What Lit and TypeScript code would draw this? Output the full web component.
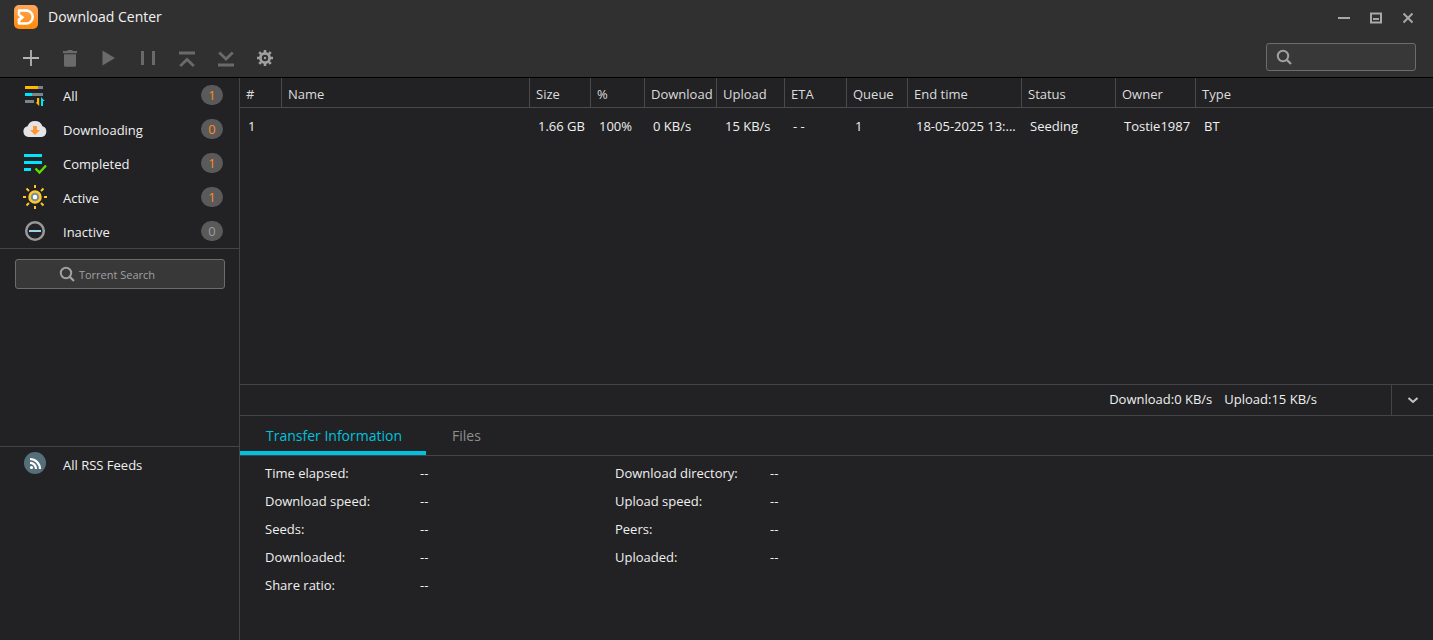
import { LitElement, html, css, svg } from "lit";
import { customElement, state } from "lit/decorators.js";
import { classMap } from "lit/directives/class-map.js";

const logo = html`<svg width="24" height="24" viewBox="0 0 24 24" aria-hidden="true">
  <defs>
    <linearGradient id="logo-fill" x1="0" y1="0" x2="0" y2="1">
      <stop offset="0" stop-color="#ffa55c" />
      <stop offset="1" stop-color="#ff8a08" />
    </linearGradient>
  </defs>
  <rect width="24" height="24" rx="5" fill="url(#logo-fill)" />
  <path d="M5 8.500V5.500H12.200a6.500 6.500 0 0 1 0 13H5V14" fill="none" stroke="#fff" stroke-width="2.500" stroke-linejoin="round" />
  <path d="M3.750 7.500L10.500 12.200 6.200 16 3.750 16.500V13.500L6 12.200 3.750 10Z" fill="#fff" />
</svg>`;

const tools = [
  { label: "Add", on: true, art: svg`<path d="M12 4v16M4 12h16" stroke="#b4b4b4" stroke-width="1.800" />` },
  { label: "Delete", on: false, art: svg`<path d="M5 5h4l1-1h4l1 1h4v2.200H5zM6 8.200h12v11a1.500 1.500 0 0 1-1.500 1.500h-9A1.500 1.500 0 0 1 6 19.200z" fill="#6a6a6a" />` },
  { label: "Start", on: false, art: svg`<path d="M5.500 4.500v15L18 12z" fill="#6a6a6a" />` },
  { label: "Pause", on: false, art: svg`<path d="M6.500 5v14M17.500 5v14" stroke="#6a6a6a" stroke-width="3" />` },
  { label: "Move to top", on: false, art: svg`<path d="M4 7h16M5.200 20l6.800-6.500 6.800 6.500" fill="none" stroke="#6a6a6a" stroke-width="2.800" />` },
  { label: "Move to bottom", on: false, art: svg`<path d="M4 19h16M5.200 6.500L12 13l6.800-6.500" fill="none" stroke="#6a6a6a" stroke-width="2.800" />` },
  {
    label: "Settings",
    on: true,
    art: svg`<circle cx="12" cy="12" r="4.600" fill="none" stroke="#a0a0a0" stroke-width="2.800" />
      <circle cx="12" cy="12" r="1.200" fill="#a0a0a0" />
      <g stroke="#a0a0a0" stroke-width="2.600">
        <path d="M12 4v3M12 17v3M4 12h3M17 12h3M6.200 6.200l2 2M15.800 15.800l2 2M6.200 17.800l2-2M15.800 8.200l2-2" />
      </g>`,
  },
];

const magnifier = svg`<circle cx="7" cy="7" r="5.200" fill="none" stroke="currentColor" stroke-width="2" />
  <path d="M10.600 10.600L15 15" stroke="currentColor" stroke-width="2.200" />`;

const categories = [
  {
    label: "All",
    count: 1,
    art: svg`<path d="M15 4.500h5M9 11.500h11M2 18.500h9" stroke="#78868f" stroke-width="3" />
      <path d="M2 4.500h13" stroke="#ffb800" stroke-width="3" />
      <path d="M2 11.500h7" stroke="#00e5ff" stroke-width="3" />
      <path d="M14 15h2.200v8L12.500 19.500H14z" fill="#ffb800" />
      <path d="M18 23v-9l3.800 4H20v5z" fill="#00e5ff" />`,
  },
  {
    label: "Downloading",
    count: 0,
    art: svg`<path d="M5.500 20a5.500 5.500 0 0 1-1-10.800A8 8 0 0 1 19.500 9.300 5.500 5.500 0 0 1 18.500 20z" fill="#e4e4e4" />
      <path d="M10 9h4v4h3l-5 5-5-5h3z" fill="#ff9632" />`,
  },
  {
    label: "Completed",
    count: 1,
    art: svg`<path d="M1 4.500h18M1 11.500h18M1 18.500h7" stroke="#00e5ff" stroke-width="3" />
      <path d="M12.500 17.500l4 4 6.500-7" fill="none" stroke="#5fdc00" stroke-width="2.400" />`,
  },
  {
    label: "Active",
    count: 1,
    art: svg`<circle cx="12" cy="12" r="5.500" fill="#78909c" stroke="#ffc72c" stroke-width="2.500" />
      <circle cx="12" cy="12" r="2.200" fill="#fff" />
      <path d="M12 0v3M12 21v3M0 12h3M21 12h3M3.500 3.500l2.500 2.500M18 18l2.500 2.500M3.500 20.500L6 18M18 6l2.500-2.500" stroke="#ffc72c" stroke-width="2" />`,
  },
  {
    label: "Inactive",
    count: 0,
    muted: true,
    art: svg`<circle cx="12" cy="12" r="8.800" fill="none" stroke="#999" stroke-width="2.500" />
      <path d="M6 12h12" stroke="#9ad4ea" stroke-width="2" />`,
  },
];

const columns = [
  { key: "num", label: "#" },
  { key: "name", label: "Name" },
  { key: "size", label: "Size" },
  { key: "percent", label: "%" },
  { key: "download", label: "Download" },
  { key: "upload", label: "Upload" },
  { key: "eta", label: "ETA" },
  { key: "queue", label: "Queue" },
  { key: "end", label: "End time" },
  { key: "status", label: "Status" },
  { key: "owner", label: "Owner" },
  { key: "type", label: "Type" },
];

const tasks: Record<string, string>[] = [
  {
    num: "1", name: "", size: "1.66 GB", percent: "100%", download: "0 KB/s", upload: "15 KB/s",
    eta: "- -", queue: "1", end: "18-05-2025 13:...", status: "Seeding", owner: "Tostie1987", type: "BT",
  },
];

const details = [
  ["Time elapsed:", "Download speed:", "Seeds:", "Downloaded:", "Share ratio:"],
  ["Download directory:", "Upload speed:", "Peers:", "Uploaded:"],
];

const reset = css`
  * { box-sizing: border-box; }
  button, input { font: inherit; color: inherit; margin: 0; padding: 0; border: 0; background: none; }
  svg { display: block; flex: none; }
`;

@customElement("window-header")
class WindowHeader extends LitElement {
  static styles = [reset, css`
    :host { display: block; background: #303030; border-bottom: 1px solid #000; }
    .title-bar { display: flex; align-items: center; height: 34px; padding: 0 16px 0 14px; }
    .title { flex: 1; margin: 0 0 0 10px; font-size: 14px; line-height: 20px; font-weight: 400; color: #f2f2f2; }
    .window-buttons { display: flex; gap: 14px; padding-top: 2px; color: #a6a8aa; }
    .window-buttons button { display: grid; place-items: center; width: 18px; height: 20px; }
    .toolbar { display: flex; align-items: center; height: 43px; padding: 3px 17px 0 19px; }
    .tools { display: flex; flex: 1; gap: 15px; padding-top: 2px; }
    .search { display: flex; align-items: center; gap: 8px; width: 150px; height: 28px; padding: 0 9px; border: 1px solid #6c6c6c; border-radius: 3px; background: #383838; color: #a0a0a0; }
    .search input { flex: 1; min-width: 0; outline: none; font-size: 12px; }
  `];

  render() {
    return html`
      <div class="title-bar">
        ${logo}
        <h1 class="title">Download Center</h1>
        <div class="window-buttons">
          <button aria-label="Minimize"><svg width="12" height="12" viewBox="0 0 12 12"><path d="M0 6h12" stroke="currentColor" stroke-width="2" /></svg></button>
          <button aria-label="Maximize"><svg width="12" height="12" viewBox="0 0 12 12"><path d="M1 1.500h10v9H1z" fill="none" stroke="currentColor" stroke-width="2" /><path d="M3 6h6v2H3z" fill="currentColor" /></svg></button>
          <button aria-label="Close"><svg width="12" height="12" viewBox="0 0 12 12"><path d="M1.500 1.500l9 9M10.500 1.500l-9 9" stroke="currentColor" stroke-width="2" /></svg></button>
        </div>
      </div>
      <div class="toolbar">
        <div class="tools">
          ${tools.map((t) => html`<button aria-label=${t.label} ?disabled=${!t.on}><svg width="24" height="24" viewBox="0 0 24 24">${t.art}</svg></button>`)}
        </div>
        <label class="search">
          <svg width="16" height="16" viewBox="0 0 16 16">${magnifier}</svg>
          <input type="text" aria-label="Search" />
        </label>
      </div>
    `;
  }
}

@customElement("side-bar")
class SideBar extends LitElement {
  static styles = [reset, css`
    :host { display: flex; flex-direction: column; width: 240px; flex: none; border-right: 1px solid #444446; }
    .list { list-style: none; margin: 0; padding: 0; }
    .categories { border-bottom: 1px solid #444446; }
    .row { display: flex; align-items: center; width: 100%; height: 34px; padding: 0 16px 0 23px; text-align: left; }
    .label { flex: 1; padding-top: 2px; margin-left: 16px; }
    .badge { display: grid; place-items: center; width: 22px; height: 20px; border-radius: 10px; background: #5a5a5a; color: #ff8a1e; font-size: 13px; line-height: 20px; }
    .badge.muted { color: #9c9c9c; }
    .torrent { display: flex; align-items: center; justify-content: center; gap: 4px; height: 30px; margin: 10px 14px 0 15px; padding-right: 26px; border: 1px solid #6c6c6c; border-radius: 3px; background: #383838; color: #a0a0a0; font-size: 11px; }
    .torrent span { padding-top: 1px; }
    .feeds { height: 194px; margin-top: auto; border-top: 1px solid #444446; }
  `];

  render() {
    return html`
      <ul class="list categories">
        ${categories.map((c) => html`<li>
          <button class="row">
            <svg width="24" height="24" viewBox="0 0 24 24">${c.art}</svg>
            <span class="label">${c.label}</span>
            <span class=${classMap({ badge: true, muted: !!c.muted })}>${c.count}</span>
          </button>
        </li>`)}
      </ul>
      <button class="torrent">
        <svg width="16" height="16" viewBox="0 0 16 16">${magnifier}</svg>
        <span>Torrent Search</span>
      </button>
      <div class="feeds">
        <button class="row">
          <svg width="24" height="24" viewBox="0 0 24 24">
            <circle cx="12" cy="11" r="11" fill="#546e7a" />
            <circle cx="8.500" cy="15.500" r="1.600" fill="#fff" />
            <path d="M7 10.800a6 6 0 0 1 6 6.200M7 7a10 10 0 0 1 10 10" fill="none" stroke="#fff" stroke-width="2.200" />
          </svg>
          <span class="label">All RSS Feeds</span>
        </button>
      </div>
    `;
  }
}

@customElement("task-table")
class TaskTable extends LitElement {
  static styles = [reset, css`
    :host { display: block; flex: 1; min-height: 0; overflow: hidden; }
    table { width: 100%; table-layout: fixed; border-collapse: separate; border-spacing: 0; }
    th, td { overflow: hidden; white-space: nowrap; text-align: left; font-weight: 400; line-height: 20px; }
    th { height: 30px; padding: 2px 0 0 6px; border-bottom: 1px solid #4a4a4c; border-right: 1px solid #4a4a4c; color: #dcdcdc; }
    th:last-child { border-right: 0; }
    td { height: 36px; padding: 0 0 0 8px; color: #f0f0f0; }
    .num { width: 42px; }
    .name { width: 248px; }
    .size { width: 61px; }
    .percent { width: 54px; }
    .download { width: 72px; }
    .upload { width: 68px; }
    .eta { width: 62px; }
    .queue { width: 61px; }
    .end { width: 114px; }
    .status { width: 94px; }
    .owner { width: 80px; }
  `];

  render() {
    return html`
      <table>
        <thead><tr>${columns.map((c) => html`<th class=${c.key} scope="col">${c.label}</th>`)}</tr></thead>
        <tbody>${tasks.map((t) => html`<tr>${columns.map((c) => html`<td>${t[c.key]}</td>`)}</tr>`)}</tbody>
      </table>
    `;
  }
}

@customElement("task-details")
class TaskDetails extends LitElement {
  @state() tab = 0;

  static styles = [reset, css`
    :host { display: block; flex: none; border-top: 1px solid #444446; }
    .speeds { display: flex; align-items: center; justify-content: flex-end; gap: 12px; height: 31px; border-bottom: 1px solid #444446; }
    .speeds span { padding-bottom: 2px; }
    .toggle { display: grid; place-items: center; width: 42px; height: 30px; margin-left: 62px; border-left: 1px solid #444446; color: #c4c4c4; }
    .tabs { display: flex; height: 40px; border-bottom: 1px solid #444446; }
    .tab { height: 39px; padding: 4px 24px 0 26px; border-bottom: 4px solid transparent; font-size: 14px; line-height: 20px; color: #8e8e8e; }
    .tab.active { border-bottom-color: #00c1de; color: #00c1de; }
    .panel { display: flex; height: 184px; padding: 3px 25px 0; }
    .list { display: grid; grid-template-columns: 155px 1fr; grid-auto-rows: 28px; align-items: center; width: 350px; margin: 0; align-content: start; }
    dd { margin: 0; }
  `];

  render() {
    return html`
      <div class="speeds">
        <span>Download:0 KB/s</span>
        <span>Upload:15 KB/s</span>
        <button class="toggle" aria-label="Collapse details">
          <svg width="12" height="12" viewBox="0 0 12 12"><path d="M1.500 4l4.500 4 4.500-4" fill="none" stroke="currentColor" stroke-width="2" /></svg>
        </button>
      </div>
      <div class="tabs" role="tablist">
        ${["Transfer Information", "Files"].map((label, i) => html`<button
          role="tab" aria-selected=${this.tab === i ? "true" : "false"}
          class=${classMap({ tab: true, active: this.tab === i })}
          @click=${() => (this.tab = i)}>${label}</button>`)}
      </div>
      <div class="panel" role="tabpanel">
        ${details.map((group) => html`<dl class="list">${group.map((d) => html`<dt>${d}</dt><dd>--</dd>`)}</dl>`)}
      </div>
    `;
  }
}

@customElement("app-root")
class AppRoot extends LitElement {
  static styles = [reset, css`
    :host {
      display: flex; flex-direction: column; box-sizing: border-box; min-height: 100vh;
      background: #222224; color: #f0f0f0;
      font-family: "Open Sans", "Noto Sans", sans-serif; font-size: 13px; line-height: 20px;
    }
    .body { display: flex; flex: 1; }
    .main { display: flex; flex-direction: column; flex: 1; min-width: 0; }
  `];

  render() {
    return html`
      <window-header></window-header>
      <div class="body">
        <side-bar></side-bar>
        <main class="main">
          <task-table></task-table>
          <task-details></task-details>
        </main>
      </div>
    `;
  }
}
